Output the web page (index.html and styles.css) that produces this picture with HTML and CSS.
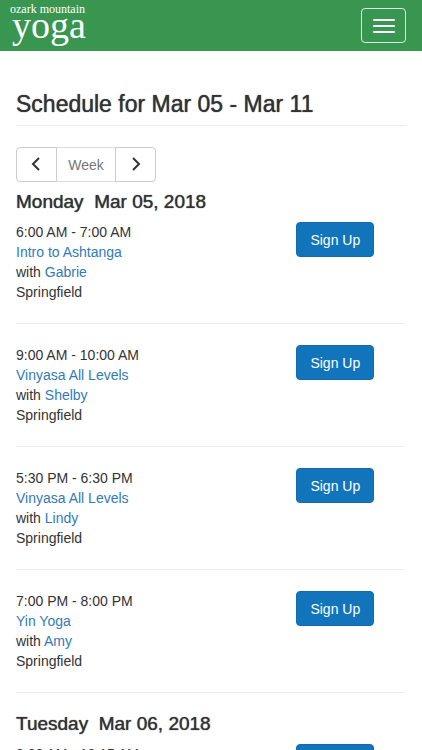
FILE: index.html
```html
<!DOCTYPE html>
<html lang="en">
<head>
<meta charset="utf-8">
<meta name="viewport" content="width=device-width, initial-scale=1">
<title>Ozark Mountain Yoga</title>
<link rel="stylesheet" href="styles.css">
</head>
<body>
<header class="navbar">
  <a class="brand" href="#"><span class="brand-top">ozark mountain</span><span class="brand-main">yoga</span></a>
  <button class="toggle" type="button" aria-label="Menu">
    <span class="bar"></span><span class="bar"></span><span class="bar"></span>
  </button>
</header>
<main class="page">
  <h1 class="title">Schedule for Mar 05 - Mar 11</h1>
  <div class="pager">
    <button class="pager-btn" type="button" aria-label="Previous week"><svg width="10" height="14" viewBox="0 0 10 14"><path d="M7 0 1 6 7 12"/></svg></button>
    <button class="pager-btn pager-label" type="button" disabled>Week</button>
    <button class="pager-btn" type="button" aria-label="Next week"><svg width="10" height="14" viewBox="0 0 10 14"><path d="M2 0 8 6 2 12"/></svg></button>
  </div>
  <section>
    <h2 class="day">Monday&nbsp; Mar 05, 2018</h2>
    <article class="session">
      <div class="details">6:00 AM - 7:00 AM<br><a href="#">Intro to Ashtanga</a><br>with <a href="#">Gabrie</a><br>Springfield</div>
      <div class="action"><button class="signup" type="button">Sign Up</button></div>
    </article>
    <article class="session">
      <div class="details">9:00 AM - 10:00 AM<br><a href="#">Vinyasa All Levels</a><br>with <a href="#">Shelby</a><br>Springfield</div>
      <div class="action"><button class="signup" type="button">Sign Up</button></div>
    </article>
    <article class="session">
      <div class="details">5:30 PM - 6:30 PM<br><a href="#">Vinyasa All Levels</a><br>with <a href="#">Lindy</a><br>Springfield</div>
      <div class="action"><button class="signup" type="button">Sign Up</button></div>
    </article>
    <article class="session">
      <div class="details">7:00 PM - 8:00 PM<br><a href="#">Yin Yoga</a><br>with <a href="#">Amy</a><br>Springfield</div>
      <div class="action"><button class="signup" type="button">Sign Up</button></div>
    </article>
  </section>
  <section>
    <h2 class="day">Tuesday&nbsp; Mar 06, 2018</h2>
    <article class="session">
      <div class="details">9:00 AM - 10:15 AM</div>
      <div class="action"><button class="signup" type="button">Sign Up</button></div>
    </article>
  </section>
</main>
</body>
</html>
```
FILE: styles.css
```css
* {
  box-sizing: border-box;
}

html {
  height: 100%;
  overflow: hidden;
}

body {
  height: 100%;
  margin: 0;
  overflow: hidden;
  background: #fff;
  color: #333;
  font: 14px/20px "Liberation Sans", Arial, sans-serif;
}

button {
  font: inherit;
}

a {
  color: #337ab7;
  text-decoration: none;
}

.navbar {
  display: flex;
  justify-content: space-between;
  align-items: flex-start;
  height: 51px;
  padding: 0 16px 0 10px;
  background: #389651;
}

.brand {
  display: flex;
  flex-direction: column;
  padding-top: 3px;
  color: #fff;
  font-family: "Liberation Serif", "Times New Roman", serif;
}

.brand-top {
  font-size: 12px;
  line-height: 12px;
}

.brand-main {
  padding-left: 2px;
  font-size: 38px;
  line-height: 20px;
}

.toggle {
  display: flex;
  flex-direction: column;
  justify-content: center;
  align-items: center;
  gap: 4px;
  width: 45px;
  height: 35px;
  margin-top: 8px;
  padding: 0;
  border: 1px solid #d8f3df;
  border-radius: 4px;
  background: none;
}

.bar {
  width: 22px;
  height: 2px;
  border-radius: 1px;
  background: #fff;
}

.page {
  padding: 0 16px;
}

.title,
.day {
  font-weight: 500;
  text-shadow: 0 0 1px #333;
}

.title {
  margin: 40px 0 21px;
  padding-bottom: 8px;
  border-bottom: 1px solid #eee;
  font-size: 23px;
  line-height: 26px;
}

.pager {
  display: flex;
}

.pager-btn {
  display: flex;
  justify-content: center;
  align-items: center;
  width: 41px;
  height: 35px;
  padding: 0;
  border: 1px solid #ccc;
  background: #fff;
  color: #333;
}

.pager-btn:first-child {
  border-radius: 4px 0 0 4px;
}

.pager-btn:last-child {
  border-radius: 0 4px 4px 0;
}

.pager-btn svg {
  fill: none;
  stroke: #333;
  stroke-width: 2;
  overflow: visible;
}

.pager-label {
  width: 60px;
  margin: 0 -1px;
  border-color: #ddd #ccc;
  color: #777;
}

.day {
  margin: 10px 0;
  font-size: 19px;
  line-height: 20px;
}

.session {
  display: flex;
  margin: 0 -16px 21px;
  padding-bottom: 22px;
  background: linear-gradient(#eee, #eee) center bottom / calc(100% - 32px) 1px no-repeat;
}

.details {
  width: calc(100% * 2 / 3);
  padding-left: 16px;
}

.action {
  width: calc(100% / 3);
  padding-left: 15px;
}

.signup {
  width: 78px;
  height: 35px;
  padding: 0;
  border: 1px solid #106bb1;
  border-radius: 4px;
  background: #1275bc;
  color: #fff;
}
```
